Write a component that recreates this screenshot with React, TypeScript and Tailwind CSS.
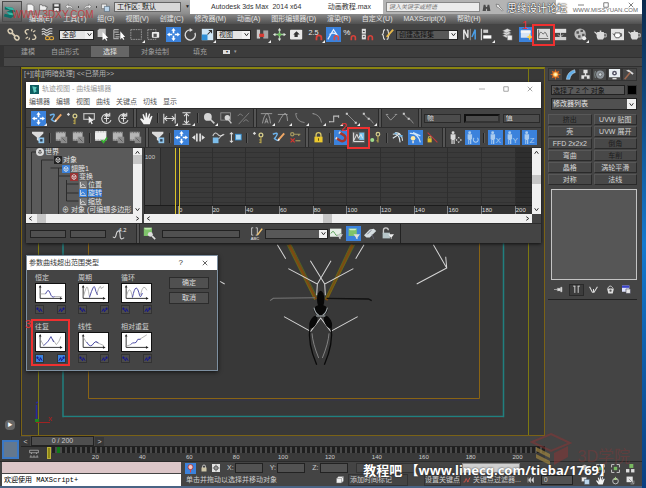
import type { ReactNode } from "react"
import { clsx } from "clsx"

const blue = "#3b82dc"

// Icon glyphs, all drawn on a 16x16 box
const glyphs: Record<string, ReactNode> = {
	link: (
		<g fill="none" stroke="#d9cdb4" strokeWidth="1.8">
			<ellipse cx="4" cy="4" rx="3" ry="2.4" transform="rotate(45 4 4)" />
			<path d="M6 6l4 4" strokeWidth="2.6" />
			<ellipse cx="12" cy="12" rx="3" ry="2.4" transform="rotate(45 12 12)" />
		</g>
	),
	unlink: (
		<g fill="none" stroke="#d9cdb4" strokeWidth="1.8">
			<path d="M6 2H4a2.500 2.500 0 0 0-2 4l2 2M10 14h2a2.500 2.500 0 0 0 2-4l-2-2" />
			<path d="M10 1l-1 3M14 3l-3 2M2 13l3-2M6 15l1-3" strokeWidth="1.4" />
		</g>
	),
	wave: (
		<g fill="none" strokeWidth="1.4">
			<path d="M1 2q2-2 4 0t4 0 5-1M1 5q2-2 4 0t4 0 5-1M1 8q2-2 4 0t4 0 5-1" stroke="#cfcfcf" />
			<ellipse cx="8" cy="12.5" rx="2.5" ry="2" stroke="#e0a93e" />
			<ellipse cx="13" cy="12.5" rx="2.5" ry="2" stroke="#e0a93e" />
		</g>
	),
	select: (
		<g>
			<path d="M2 3l2-2h8v8l-2 2H2z" fill="#c4c4c4" />
			<path d="M8 5l7 7-2.6.2L14 15l-1.5.6L11 13l-3 2z" fill="#fff" />
		</g>
	),
	byName: (
		<g>
			<path d="M1 2h6M1 5h6M3 8h5M3 11h5M1 2v11h6" stroke="#a8a8a8" strokeWidth="1.4" fill="none" />
			<path d="M9 4l6 7-2.6.2L14 14l-1.5.6L11 12l-2 2z" fill="#fff" />
		</g>
	),
	rect: <path d="M1 2h13v12H1z" fill="none" stroke="#aaa" strokeDasharray="2 1" />,
	cross: (
		<g>
			<path d="M1 2h10v12H1z" fill="none" stroke="#aaa" strokeDasharray="2 1" />
			<rect x="6" y="5" width="9" height="7" rx="1" fill="#eee" />
			<rect x="8" y="7" width="4" height="4" fill="#555" />
		</g>
	),
	move: (
		<path
			d="M8 0l2.6 3.4H9v3h-2v-3H5.400zM8 16l2.600-3.400H9v-3H7v3H5.400zM0 8l3.400-2.600V7h3v2h-3v1.600zM16 8l-3.400-2.600V7h-3v2h3v1.600z"
			fill="#fff"
		/>
	),
	rotate: (
		<g fill="none" stroke="#ddd" strokeWidth="1.6">
			<path d="M13.500 6A6.300 6.300 0 1 1 8 2.200" />
			<path d="M7 0l4 2.500L7 5z" fill="#ddd" stroke="none" />
		</g>
	),
	scale: (
		<g>
			<rect x="1" y="1" width="14" height="14" fill="#cfe6f6" />
			<rect x="1" y="8" width="7" height="7" fill="#2f8fd6" />
			<path d="M8 8l5-5M9.500 3H13v3.500" stroke="#333" strokeWidth="1.300" fill="none" />
		</g>
	),
	pivot: (
		<g>
			<rect x="1" y="2" width="4" height="11" fill="#c8c8c8" />
			<rect x="9" y="3" width="6" height="10" fill="#a5a5a5" />
			<path d="M4 7h6v4H4z" fill="#d93b33" />
		</g>
	),
	manip: (
		<g>
			<path d="M8 1v14M1 8h14" stroke="#9fd09a" strokeWidth="1.600" />
			<path d="M8 0l2 3H6zM8 16l2-3H6zM0 8l3-2v4zM16 8l-3-2v4z" fill="#e3e3e3" />
			<circle cx="8" cy="8" r="2" fill="#6cbf5a" />
		</g>
	),
	keyboard: (
		<g>
			<rect x="0" y="2" width="15" height="12" rx="1" fill="#e8e8e8" />
			<path d="M8 4l4 4H9.500v3h-4V8H4z" fill="#333" />
		</g>
	),
	snap: (
		<g>
			<text x="-2" y="8" fontSize="9" fill="#eee" fontFamily="Liberation Sans">2.5</text>
			<path d="M8 15v-3a3 3 0 0 1 6 0v3" fill="none" stroke="#d8423a" strokeWidth="2.200" />
		</g>
	),
	angle: (
		<g fill="none">
			<path d="M1 14L8 2l6 9M3 8q5-4 10 1" stroke="#e4efff" strokeWidth="1.400" />
			<path d="M9 15v-3a2.400 2.400 0 0 1 5 0v3" stroke="#e0483f" strokeWidth="2" />
		</g>
	),
	percent: (
		<g>
			<text x="-1" y="9" fontSize="10" fill="#eee" fontFamily="Liberation Sans">%</text>
			<path d="M9 15v-3a2.400 2.400 0 0 1 5 0v3" fill="none" stroke="#d8423a" strokeWidth="2" />
		</g>
	),
	spinner: (
		<g>
			<rect x="1" y="1" width="5" height="6" fill="#ddd" />
			<rect x="1" y="8" width="5" height="6" fill="#ddd" />
			<path d="M2 5l1.500-2L5 5zM2 10l1.500 2L5 10z" fill="#333" />
			<path d="M9 15v-3a2.400 2.400 0 0 1 5 0v3" fill="none" stroke="#d8423a" strokeWidth="2" />
		</g>
	),
	braces: (
		<g fill="none" stroke="#ddd" strokeWidth="1.300">
			<path d="M5 2Q3 2 3 5T1 8q2 0 2 3t2 3M7 2q2 0 2 3t2 3q-2 0-2 3t-2 3" />
			<path d="M7 11l8-9" stroke="#e8b94a" strokeWidth="2.200" />
		</g>
	),
	mirror: (
		<g>
			<path d="M1 14V2l5 10V2" fill="none" stroke="#e5e5e5" strokeWidth="1.800" />
			<path d="M9 1v14" stroke="#aaa" />
			<path d="M11 11l4-9v12" fill="none" stroke="#4a9fe8" strokeWidth="1.800" />
		</g>
	),
	align: (
		<g fill="#cfcfcf">
			<rect x="1" y="1" width="1.500" height="14" />
			<rect x="4" y="2" width="6" height="4" />
			<rect x="4" y="9" width="10" height="4" fill="#fff" />
		</g>
	),
	layers: (
		<g fill="#dcdcdc" stroke="#555" strokeWidth=".5">
			<path d="M3 9.500l6-3 5 2.500-6 3z" />
			<path d="M3 6.500l6-3L14 6l-6 3z" />
			<path d="M3 3.500l6-3L14 3 8 6z" />
			<path d="M9 9h6v6H9z" fill="#eee" />
		</g>
	),
	ribbon: (
		<g>
			<rect x="1" y="3" width="12" height="9" fill="#d7e4f5" />
			<rect x="1" y="3" width="12" height="3" fill="#f6f6f6" />
			<path d="M12 7l1.300 2.700L16 11l-2.700 1.300L12 15l-1.300-2.700L8 11l2.700-1.300z" fill="#ffd24a" />
		</g>
	),
	curveEditor: (
		<g>
			<rect x="0" y="1" width="16" height="14" fill="#dcdcdc" />
			<path d="M2 2v11h12M2 10q2-7 4-4t3 0 4 5" fill="none" stroke="#555" />
		</g>
	),
	schematic: (
		<g>
			<rect x="0" y="1" width="15" height="5" fill="#e1e1e1" />
			<rect x="0" y="11" width="15" height="4" fill="#cfcfcf" />
			<path d="M8 4v7M5 8l3 3 3-3" stroke="#ddd" fill="none" />
		</g>
	),
	material: (
		<g>
			<circle cx="7.500" cy="7.500" r="7" fill="#bdbdbd" />
			<path d="M3 4h3v3H3zM8 2h3v3H8zM5 9h3v3H5zM10 7h3v3h-3z" fill="#555" />
			<circle cx="12.500" cy="12.500" r="2.500" fill="#eee" />
		</g>
	),
	teapot: (
		<g fill="#dcdcdc">
			<path d="M4 5h8q2 6-1 9H5Q2 11 4 5z" />
			<path d="M4 9L0 5l1-.8L5 7zM7 3h2v2H7z" />
			<path d="M12 7h3v4h-3" fill="none" stroke="#dcdcdc" />
		</g>
	),
	teapotFrame: (
		<g>
			<rect x="0" y="1" width="16" height="14" fill="#e4e4e4" />
			<path d="M5 6h6q2 4-1 6H6Q3 10 5 6zM5 9L2 7M11 7h2v3h-2" fill="#fff" stroke="#444" />
		</g>
	),
	draw: (
		<g fill="none" strokeWidth="1.700">
			<path d="M1 4q7-3 5 1t-3 4 4 3" stroke="#6db3ec" />
			<path d="M8 11l7-8" stroke="#f0a765" strokeWidth="2.400" />
			<path d="M7 12l2-2" stroke="#eee" strokeWidth="2" />
		</g>
	),
	addKey: (
		<g>
			<path d="M3 1l2 2-2 2-2-2z" fill="#ddd" />
			<circle cx="11" cy="5" r="2.300" fill="none" stroke="#d4cc8c" strokeWidth="1.600" />
			<path d="M11 7v8M11 11H9M11 14H9" stroke="#b4a14c" strokeWidth="1.500" />
		</g>
	),
	region: (
		<g>
			<rect x="1" y="2" width="13" height="7" fill="none" stroke="#bbb" strokeWidth="1.500" />
			<path d="M7 5l6 6-2.500.2 1.500 3.400-1.500.4L9 12l-2 2z" fill="#eee" />
		</g>
	),
	slide: (
		<g fill="none" stroke="#ddd" strokeWidth="1.300">
			<path d="M12 4A5.800 5.800 0 1 0 13.500 10" />
			<path d="M8 5v7M5 8h6M12 1v4H9" />
			<path d="M6 5l2-3 2 3z" fill="#ddd" />
		</g>
	),
	hand: (
		<path
			d="M4.500 15L0 8.500l1.500-.8L5 10 3 3l1.500-.5 2.200 5L7 1h1.600L9 7.500l2.100-5.700 1.500.4L11 8.500l3-4 1.400.8L12 15z"
			fill="#f2f2f2"
		/>
	),
	panH: <path d="M1 2v12M15 2v12M2 8h12M5 5L2 8l3 3M11 5l3 3-3 3" fill="none" stroke="#ddd" strokeWidth="1.300" />,
	panV: <path d="M3 1h10M3 15h10M8 2v12M5 5l3-3 3 3M5 11l3 3 3-3" fill="none" stroke="#ddd" strokeWidth="1.300" />,
	zoom: (
		<g>
			<path d="M8 8l6 6" stroke="#ccc" strokeWidth="2" />
			<circle cx="6" cy="6" r="4.800" fill="#d5d5d5" />
		</g>
	),
	zoomRegion: (
		<g>
			<rect x="1" y="1" width="12" height="9" fill="none" stroke="#999" />
			<circle cx="9" cy="7" r="3.300" fill="#d5d5d5" />
			<path d="M10 9l4 5" stroke="#ccc" strokeWidth="1.700" />
		</g>
	),
	isolate: <path d="M1 5q3-5 6 0M2 15L15 1M8 12q3-5 6 0" fill="none" stroke="#7c7c7c" strokeWidth="1.200" />,
	tanAuto: (
		<g fill="none" stroke="#aaa">
			<path d="M1 2h14M3 14Q5 4 8 2t5 12" />
			<path d="M6 14l2-6 2 6M7 12h2" />
		</g>
	),
	tanSpline: <path d="M1 3h12M2 13Q4 8 8 3t5 8" fill="none" stroke="#aaa" />,
	tanFast: <path d="M2 2q1 10 11 11M2 2h2" fill="none" stroke="#999" />,
	tanSlow: <path d="M2 2q9 1 11 11M2 2h2" fill="none" stroke="#999" />,
	tanStep: <path d="M2 12h5V5h6M2 11v2M13 4v3" fill="none" stroke="#bbb" strokeWidth="1.400" />,
	tanLinear: (
		<g>
			<path d="M2 2l11 11" stroke="#999" />
			<path d="M1 1h2.500v2.500H1zM12 12h2.500v2.500H12z" fill="#ccc" />
		</g>
	),
	tanSmooth: (
		<g>
			<path d="M2 2q3 5 6 6t6 6" fill="none" stroke="#999" />
			<path d="M1 1h2.500v2.500H1zM7 7h2.500v2.500H7z" fill="#ccc" />
		</g>
	),
	breakTan: <path d="M2 4l5 6 6-6M1 3h3M12 3h3" fill="none" stroke="#aaa" />,
	filter: (
		<g>
			<path d="M0 1h14v2L9 8v5l-3-2V8L0 3z" fill="#dcdcdc" />
			<rect x="8" y="8" width="7" height="7" fill="#8fc6ee" />
			<path d="M10 10h3v3h-3z" fill="#345" />
		</g>
	),
	film: (
		<g>
			<path d="M1 1h12v11H1z" fill="#b5b5b5" />
			<path d="M1 2h12M1 11h12" stroke="#444" strokeDasharray="1 1" />
			<path d="M7 7h8v8H7z" fill="#8b8b8b" />
			<path d="M9 9l4 4" stroke="#555" />
		</g>
	),
	filmOk: (
		<g>
			<path d="M0 0h14v12H0z" fill="#eee" />
			<path d="M0 1h14M0 11h14" stroke="#777" strokeDasharray="1 1" />
			<path d="M8 11l2.500 3L15 8" stroke="#35b32f" strokeWidth="2" fill="none" />
		</g>
	),
	moveH: <path d="M0 8l4-3v6zM16 8l-4-3v6zM5 3h2v10H5zM9 3h2v10H9z" fill="#e3e3e3" />,
	scaleKeys: (
		<g>
			<path d="M1 6q3-6 6-2t8 0" fill="none" stroke="#ccc" strokeWidth="1.400" />
			<rect x="1" y="8" width="7" height="7" fill="#7cbdea" />
			<path d="M8 10l5-6" stroke="#eee" />
		</g>
	),
	scaleVals: (
		<g>
			<path d="M3 2v12M1 4l2-2 2 2M1 12l2 2 2-2" fill="none" stroke="#ddd" strokeWidth="1.300" />
			<rect x="8" y="4" width="7" height="7" fill="#a8d6f3" stroke="#2f8fd6" />
		</g>
	),
	reduce: (
		<g fill="none" strokeWidth="1.500">
			<circle cx="4" cy="4" r="2" stroke="#a5995f" />
			<path d="M6 4h8M12 4v2" stroke="#a5995f" />
			<path d="M2 9l5 5M7 9l-5 5" stroke="#d4352e" />
			<path d="M8 12h6" stroke="#a5995f" />
		</g>
	),
	lock: (
		<g>
			<path d="M5 8V5a3 3 0 0 1 6 0v3" fill="none" stroke="#d8c766" strokeWidth="1.600" />
			<rect x="3" y="7" width="10" height="7" fill="#ecc92f" />
			<path d="M7.500 9h1v3h-1z" fill="#443a00" />
		</g>
	),
	magnet: (
		<g fill="none" transform="rotate(-60 8 8)">
			<path d="M4 3v6a4 4 0 0 0 8 0V3" stroke="#a5352b" strokeWidth="3" />
			<path d="M2.500 3h3M10.500 3h3" stroke="#ddd" strokeWidth="2" />
		</g>
	),
	range: (
		<g>
			<rect x="0" y="1" width="16" height="14" fill="#5a5a5a" />
			<rect x="9" y="2" width="6" height="9" fill="#79c4ee" />
			<path d="M2 2v11h13M2 12l4-8 2 5 3-5 2 5" fill="none" stroke="#e8e8e8" strokeWidth="1.200" />
		</g>
	),
	keyable: (
		<g>
			<circle cx="4" cy="11" r="2.500" fill="#9fdd8c" />
			<circle cx="11" cy="4" r="2.200" fill="none" stroke="#d4cc8c" strokeWidth="1.500" />
			<path d="M11 6v8M11 12H9" stroke="#b4a14c" strokeWidth="1.500" />
		</g>
	),
	tangents: (
		<g fill="none" stroke="#dfe9ee" strokeWidth="1.300">
			<path d="M1 4q8-2 9 10M4 2q8 0 9 10M1 9l9-6" />
			<path d="M3 3h3M9 6h4" stroke="#73b6e4" strokeWidth="2" />
		</g>
	),
	tangentSel: (
		<g fill="none">
			<path d="M1 3q10-1 13 11M5 2l9 4" stroke="#cfe6fa" strokeWidth="1.500" />
			<circle cx="5" cy="9" r="2.800" fill="#ffe9a0" />
			<path d="M5 12v3" stroke="#ddd" strokeWidth="2" />
		</g>
	),
	tangentLock: (
		<g>
			<path d="M2 2l12 12" stroke="#c0393d" strokeWidth="1.300" />
			<path d="M3 9V7h3v2" fill="none" stroke="#d8c766" />
			<path d="M2 9h5v5H2z" fill="#e0c02f" />
		</g>
	),
	biped: (
		<g fill="#dadada">
			<circle cx="5" cy="2" r="1.800" />
			<path d="M2 4h6v6H7v6H5.500v-5h-1v5H3v-6H2z" />
			<path d="M12 7l1.500 2h-3zM12 15l1.500-2h-3zM8 11l2-1.500v3zM16 11l-2-1.500v3z" />
		</g>
	),
	bipedRot: (
		<g fill="#a9cbee">
			<circle cx="4.500" cy="2" r="1.800" />
			<path d="M2 4h5.500v6h-1v6H5v-5H4v5H2.800v-6H2z" />
			<path d="M14 8.500a3 3 0 1 1-4 0" fill="none" stroke="#a9cbee" strokeWidth="1.300" />
		</g>
	),
	bipedX: bipedAxis("X"),
	bipedY: bipedAxis("Y"),
	bipedZ: bipedAxis("Z"),
	stats: (
		<g>
			<path d="M1 12q3 3 4-2t3-5 2 6 5 2" fill="none" stroke="#ddd" strokeWidth="1.300" />
			<text x="8" y="6" fontSize="7" fill="#eee" fontFamily="Liberation Sans">4.2</text>
		</g>
	),
	zoomObj: (
		<g>
			<rect x="1" y="1" width="10" height="10" fill="#7fc36b" />
			<path d="M1 1h10L9 3H3z" fill="#bfe8b0" />
			<circle cx="9" cy="9" r="3" fill="#ddd" />
			<path d="M11 11l4 4" stroke="#ddd" strokeWidth="2" />
		</g>
	),
	label: (
		<g fill="none" stroke="#ddd">
			<path d="M4 1H2v9h2M7 1h2v9H7" />
			<path d="M9 10l6-8" stroke="#efc271" strokeWidth="2" />
			<text x="1" y="16" fontSize="5" fill="#eee" stroke="none" fontFamily="Liberation Sans">ABC</text>
		</g>
	),
	curveFilter: (
		<g>
			<rect x="0" y="2" width="14" height="10" fill="#e7efe7" />
			<path d="M1 8q3-5 5 0t7 0" fill="none" stroke="#4b9a4b" />
			<path d="M8 9h8l-3 4v2l-2-1v-1z" fill="#ccc" />
		</g>
	),
	objFilter: (
		<g>
			<rect x="2" y="2" width="10" height="9" fill="#7fc36b" />
			<path d="M2 2h10l-2 2H4z" fill="#cfeec4" />
			<path d="M8 9h8l-3 4v2l-2-1v-1z" fill="#ddd" />
		</g>
	),
	pinFilter: (
		<g fill="#d5dde0">
			<path d="M0 10l7-7 5-1 3 3-8 8H3z" />
			<path d="M4 9l5-5M10 9l2 6" stroke="#667" />
		</g>
	),
	unlockFilter: (
		<g>
			<path d="M3 8V4a3 3 0 0 1 6 0" fill="none" stroke="#ccc" strokeWidth="1.600" />
			<rect x="2" y="7" width="9" height="7" fill="#b7c6c9" />
			<path d="M9 9h7l-3 4v2l-1-1v-1z" fill="#eee" />
		</g>
	),
	newDoc: <path d="M2 2h8l4 4v9H2z" fill="#f4f4f4" stroke="#555" />,
	open: <path d="M1 13V3h4l1 2h6v2h3l-3 6z" fill="#eee" stroke="#444" />,
	save: (
		<g>
			<path d="M1 1h14v14H1z" fill="#444" />
			<path d="M4 2h8v4H4zM4 9h8v5H4z" fill="#eee" />
		</g>
	),
	undo: <path d="M6 2L1 6.500 6 11V8q6-1 8 4 0-8-8-7z" fill="#eee" stroke="#555" strokeWidth=".8" />,
	redo: <path d="M10 2l5 4.500L10 11V8Q4 7 2 12q0-8 8-7z" fill="#eee" stroke="#555" strokeWidth=".8" />,
	project: (
		<g>
			<path d="M1 2h9v8H1z" fill="#eee" stroke="#555" />
			<path d="M6 6h9v9H6z" fill="#bcd6ec" stroke="#456" />
		</g>
	),
	binoculars: <path d="M1 14L3 3h3l1 4h2l1-4h3l2 11H9v-4H7v4z" fill="#4c4c4c" />,
	wrench: <path d="M2 2l5 1 1 3 6 7-1.500 1.500L6 8 3 7z" fill="#eee" stroke="#555" />,
	star: <path d="M8 1l2 5 5 .3-4 3.400 1.400 5L8 12l-4.400 2.700L5 9.700 1 6.300 6 6z" fill="#777" />,
	create: (
		<g>
			<path d="M8 0l1.500 4 4-1.500L12 6.500l4 1.500-4 1.500 1.500 4-4-1.500L8 16l-1.500-4-4 1.500 1.500-4L0 8l4-1.500-1.500-4 4 1.500z" fill="#d9681f" />
			<circle cx="8" cy="8" r="3.400" fill="#ffd06a" />
			<circle cx="8" cy="8" r="1.700" fill="#fff6cf" />
		</g>
	),
	modify: <path d="M2 15Q3 4 14 1l1 4Q8 7 7 15z" fill="#62aee8" stroke="#d9efff" strokeWidth=".7" />,
	hierarchy: <path d="M5 1h6v5H9v3h5v5h-4v-3H6v3H2V9h5V6H5z" fill="#e3e3e3" />,
	motion: (
		<g fill="none">
			<circle cx="9" cy="8" r="6" fill="#8e959b" />
			<circle cx="9" cy="8" r="2.500" fill="#cfd8dd" stroke="#555" />
			<path d="M2 3q-2 5 0 10" stroke="#9aa" />
		</g>
	),
	display: (
		<g>
			<rect x="0" y="0" width="16" height="12" fill="#e8eef2" />
			<circle cx="8" cy="6" r="3.500" fill="#556" />
			<circle cx="8" cy="6" r="1.300" fill="#fff" />
			<path d="M5 13h6v2H5z" fill="#ddd" />
		</g>
	),
	hammer: (
		<g>
			<path d="M3 2l4-1 7 5-1.500 2.500L8 5z" fill="#dadada" />
			<path d="M9 5L1 15" stroke="#a06a50" strokeWidth="2.200" />
		</g>
	),
	pin: <path d="M0 8h6M6 5v6M7 6h4v4H7zM12 4h2v8h-2z" fill="#ddd" stroke="#ddd" />,
	showEnd: <path d="M5 2v12M11 2v12M2 2h4M10 2h4" stroke="#e5e5e5" strokeWidth="1.500" fill="none" />,
	unique: <path d="M1 3l5 10h3l6-10M8 13V7" stroke="#ddd" strokeWidth="1.800" fill="none" />,
	trash: (
		<g>
			<path d="M2 6h12l-2 9H4z" fill="#ddd" />
			<path d="M3 6q4-8 9-1" fill="none" stroke="#ddd" strokeWidth="1.500" />
			<circle cx="8" cy="10" r="2" fill="#555" />
		</g>
	),
	config: (
		<g>
			<rect x="0" y="1" width="13" height="11" fill="#dfe4ff" />
			<path d="M0 1h13v4H0z" fill="#3a43c8" />
			<path d="M7 7h8v8H7z" fill="#e8e8e8" stroke="#445" />
		</g>
	),
	pinRed: (
		<g>
			<circle cx="8" cy="5.500" r="4.500" fill="#f4c8c4" stroke="#b03030" strokeWidth="1.500" />
			<path d="M7 9h2v6H7z" fill="#d44" />
		</g>
	),
	lockGrey: (
		<g>
			<path d="M5 8V5a3 3 0 0 1 6 0v3" fill="none" stroke="#ddd" strokeWidth="1.600" />
			<rect x="3" y="7" width="10" height="8" fill="#cfc6a8" />
		</g>
	),
	abs: (
		<g>
			<rect x="0" y="0" width="16" height="16" fill="#e2e2e2" />
			<circle cx="8" cy="8" r="4" fill="none" stroke="#333" strokeWidth="1.500" />
			<path d="M8 1v14M1 8h14" stroke="#333" />
		</g>
	),
	cube: <path d="M1 5l4-4h10v9l-4 4H1zM1 5h10v9M11 5l4-4" fill="#eee" stroke="#777" />,
	keyCurve: <path d="M1 12q3 2 4-4t3 0 2 4 4-9" fill="none" stroke="#cf5248" strokeWidth="1.800" />,
	start: <path d="M2 3v10M7 3v10L3 8zM13 3v10L9 8z" fill="#ddd" stroke="#ddd" />,
	extents: (
		<g>
			<path d="M1 6V1h5M10 1h5v5M15 10v5h-5M6 15H1v-5" fill="none" stroke="#ddd" strokeWidth="1.500" />
			<rect x="5" y="5" width="6" height="6" fill="#77b860" />
		</g>
	),
	extentsAll: (
		<g>
			<rect x="6" y="0" width="7" height="7" fill="#77b860" />
			<rect x="0" y="9" width="6" height="6" fill="#ddd" />
			<path d="M9 9h6v6H9z" fill="#ddd" />
		</g>
	),
	orbit: (
		<g fill="none">
			<circle cx="8" cy="9" r="5" stroke="#ddd" strokeWidth="1.400" />
			<path d="M8 1l3 6H5z" fill="#a9cf8a" />
		</g>
	),
	maximize: (
		<g>
			<rect x="1" y="1" width="11" height="10" fill="#e3e3e3" />
			<path d="M5 5l9 9M14 8v6H8" fill="none" stroke="#999" strokeWidth="1.700" />
		</g>
	),
	trackBar: <path d="M1 2h14v4H1zM1 13h14M3 10v3M8 10v3M13 10v3M4 6v2M12 6v2" fill="none" stroke="#ccc" />,
}

function bipedAxis(axis: string) {
	return (
		<g fill="#a9cbee">
			<circle cx="4.500" cy="2" r="1.800" />
			<path d="M2 4h5.500v6h-1v6H5v-5H4v5H2.800v-6H2z" />
			<text x="8" y="15" fontSize="10" fontFamily="Liberation Sans">{axis}</text>
		</g>
	)
}

function Glyph({ name, className = "size-[13px]" }: { name: string; className?: string }) {
	return (
		<svg viewBox="0 0 16 16" className={clsx("shrink-0 overflow-visible", className)} aria-hidden="true">
			{glyphs[name]}
		</svg>
	)
}

function Tool({ name, active, marked, corner }: { name: string; active?: boolean; marked?: boolean; corner?: boolean }) {
	return (
		<button
			aria-label={name}
			className={clsx("relative flex h-4 w-[17px] shrink-0 items-center justify-center", marked && "z-10 outline-2 outline-offset-1 outline-[#ef3030]")}
		>
			<span className={clsx("flex size-[15px] items-center justify-center", active && "bg-[#3b82dc]")}>
				<Glyph name={name} />
			</span>
			{corner && (
				<svg viewBox="0 0 3 3" className="absolute right-0 bottom-0 size-[3px]">
					<path d="M3 0v3H0z" fill="#eee" />
				</svg>
			)}
		</button>
	)
}

// "|" thin divider, "#" group boundary, "." small gap, "*" active, "!" outlined, "," has a flyout
function ToolRow({ items }: { items: string[] }) {
	return items.map((item, i) => {
		if (item === "|") return <span key={i} className="mx-0.5 h-2.5 w-0.5 shrink-0 border-r border-[#5a5a5a] bg-[#222]" />
		if (item === "#") return <span key={i} className="mx-px h-full w-1 shrink-0 border-x border-[#2a2a2a] bg-[#555]" />
		if (item === ".") return <span key={i} className="w-[3px] shrink-0" />
		return (
			<Tool
				key={i}
				name={item.replace(/[*!,]/g, "")}
				active={item.includes("*")}
				marked={item.includes("!")}
				corner={item.includes(",")}
			/>
		)
	})
}

function Combo({ label, value, className, dark }: { label: string; value: string; className: string; dark?: boolean }) {
	return (
		<span className={clsx("relative flex h-[10px] shrink-0", className)}>
			<select
				aria-label={label}
				className={clsx(
					"h-full w-full appearance-none border border-[#222] pl-0.5 text-[7px] leading-[8px] outline-none",
					dark ? "bg-[#585858] text-[#111]" : "bg-[#e4e4e4] text-[#222]",
				)}
			>
				<option>{value}</option>
			</select>
			<span className="pointer-events-none absolute inset-y-px right-px flex w-2 items-center justify-center bg-[#f0f0f0]">
				<Chevron dir="down" />
			</span>
		</span>
	)
}

function Chevron({ dir }: { dir: "up" | "down" | "left" | "right" }) {
	return (
		<svg
			viewBox="0 0 8 8"
			className={clsx("size-[5px]", dir === "up" && "rotate-180", dir === "left" && "rotate-90", dir === "right" && "-rotate-90")}
		>
			<path d="M1 2l3 4 3-4" fill="none" stroke="#333" strokeWidth="1.600" />
		</svg>
	)
}

function VScroll({ thumb }: { thumb: string }) {
	return (
		<div className="flex w-[9px] shrink-0 flex-col items-center bg-[#f0f0f0] py-0.5">
			<Chevron dir="up" />
			<div className="w-full flex-1">
				<div className={clsx("h-[9px] w-full bg-[#c6c6c6]", thumb)} />
			</div>
			<Chevron dir="down" />
		</div>
	)
}

function HScroll({ thumb }: { thumb: string }) {
	return (
		<div className="flex h-[9px] items-center bg-[#f0f0f0] px-0.5">
			<Chevron dir="left" />
			<div className="h-full flex-1">
				<div className={clsx("h-full w-[9px] bg-[#c6c6c6]", thumb)} />
			</div>
			<Chevron dir="right" />
		</div>
	)
}

const mainMenu = ["编辑(E)", "工具(T)", "组(G)", "视图(V)", "创建(C)", "修改器(M)", "动画(A)", "图形编辑器(D)", "渲染(R)", "自定义(U)", "MAXScript(X)", "帮助(H)"]

function Header() {
	return (
		<header className="relative">
			<div className="flex h-[14px] items-center bg-white">
				<div className="flex h-full w-[190px] shrink-0 items-center gap-1 bg-gradient-to-b from-[#b5b5b5] to-[#8c8c8c] pl-[26px]">
					{["newDoc", "open", "save", "undo"].map((n) => (
						<Glyph key={n} name={n} className="size-[9px]" />
					))}
					<span className="size-0.5 bg-[#444]" />
					<Glyph name="redo" className="size-[9px]" />
					<span className="size-0.5 bg-[#444]" />
					<Glyph name="project" className="size-[9px]" />
					<select aria-label="工作区" className="h-[10px] w-[67px] shrink-0 appearance-none border border-[#666] bg-[#d8d8d8] pl-0.5 text-[7px] leading-[8px] text-[#111]">
						<option>工作区: 默认</option>
					</select>
					<span className="text-[5px] text-[#222]">▼</span>
				</div>
				<p className="flex w-[193px] shrink-0 justify-between pr-3 pl-[21px] text-[7px] text-[#333]">
					<span>Autodesk 3ds Max&nbsp; 2014 x64</span>
					<span>动画教程.max</span>
				</p>
				<div className="flex h-full flex-1 items-center bg-[#b4b4b4]">
					<input
						aria-label="搜索"
						placeholder="键入关键字或短语"
						className="ml-[3px] h-[10px] w-[94px] border border-[#888] bg-[#ececec] px-0.5 text-[6px] italic placeholder:text-[#777]"
					/>
					<div className="ml-0.5 flex items-center gap-1">
						{["binoculars", "wrench", "star"].map((n) => (
							<Glyph key={n} name={n} className="size-[9px]" />
						))}
					</div>
				</div>
				<div className="flex h-full w-[86px] shrink-0 items-start justify-between bg-white pt-0.5 pr-2 pl-[22px] text-[#555]">
					<svg viewBox="0 0 8 8" className="size-[6px]"><path d="M0 4h8" stroke="currentColor" /></svg>
					<svg viewBox="0 0 8 8" className="size-[6px]"><path d="M1 1h6v6H1z" fill="none" stroke="currentColor" /></svg>
					<svg viewBox="0 0 8 8" className="size-[6px]"><path d="M1 1l6 6M7 1L1 7" stroke="currentColor" /></svg>
				</div>
			</div>
			<nav className="flex h-[10px] items-center gap-[11px] bg-gradient-to-b from-[#8a8a8a] to-[#505050] pl-[29px] text-[7px] leading-[10px] whitespace-nowrap text-[#e4e4e4]">
				{mainMenu.map((m) => (
					<button key={m}>{m}</button>
				))}
			</nav>
			<button aria-label="3ds Max" className="absolute top-px left-0.5 flex h-[21px] w-[20px] items-center border border-[#4c4c4c] bg-gradient-to-b from-[#9a9a9a] to-[#5c5c5c]">
				<svg viewBox="0 0 16 16" className="size-[14px]">
					<path d="M2 2l9 1 3 4-3 2 2 3-4 3-8-2 1-3 5 1-3-3 4-2-6-1z" fill="#0d6e68" />
					<path d="M2 2l9 1 2 3-6-1zM4 8l7 1 2 3-6-1z" fill="#37b8a6" />
				</svg>
			</button>
			<span className="absolute top-[9px] left-3 text-[10px] leading-3 text-[#c92f2f]/80">WWW.3DXY.COM</span>
			<span className="absolute top-[3px] right-[75px] text-[10px] leading-3 text-white [text-shadow:0_0_1px_#333,0_0_1px_#333,0_0_2px_#333]">思缘设计论坛</span>
			<span className="absolute top-[6px] right-1 text-[6px] leading-2 text-[#666]">WWW.MISSYUAN.COM</span>
		</header>
	)
}

function MainToolbar() {
	return (
		<div className="relative flex h-[22px] items-center border-b border-[#333] bg-[#444] pl-[5px]">
			<ToolRow items={["link", "unlink", "wave", "."]} />
			<Combo label="选择过滤器" value="全部" className="w-[35px]" />
			<ToolRow items={["select", "byName", "rect,", "cross", ".", "*move", "rotate", "scale,"]} />
			<Combo label="参考坐标系" value="视图" className="w-[35px]" />
			<ToolRow items={[".", "pivot,", "manip", "keyboard", ".", "snap,", "*angle", "percent", "spinner", ".", "braces"]} />
			<Combo label="命名选择集" value="创建选择集" className="w-[62px]" dark />
			<ToolRow items={[".", "mirror", "align,", ".", "layers", ".", "*ribbon", "!curveEditor", "schematic", ".", "material,", ".", "teapot", "teapotFrame", "teapot"]} />
			<span className="absolute -top-1 right-[114px] text-[11px] leading-[11px] text-[#ef3030]">1</span>
		</div>
	)
}

function Ribbon() {
	return (
		<div className="border-l-4 border-[#333] bg-[#3c3c3c]">
			<div className="flex h-[11px] items-center text-[7px] leading-[11px] text-[#a0a0a0]">
				<button className="ml-[17px]">建模</button>
				<button className="ml-4">自由形式</button>
				<button className="ml-3 w-[38px] bg-[#666] text-[#e0e0e0]">选择</button>
				<button className="ml-3">对象绘制</button>
				<button className="ml-6">填充</button>
				<span className="ml-4 flex h-1 w-[7px] items-center justify-center bg-[#ddd] text-[4px] leading-none text-[#222]">▾</span>
				<span className="ml-1 text-[5px]">▾</span>
			</div>
			<div className="h-[10px] border-y border-[#303030] bg-[#484848]" />
		</div>
	)
}

function Scene() {
	return (
		<svg className="absolute inset-0 size-full" aria-hidden="true">
			<g transform="translate(-21 -67)" fill="none">
				<path d="M38.500 436V68.500H528.500V436" stroke="#7d7911" />
				<path d="M63 110V416.500H503.500V110" stroke="#20807f" strokeWidth="1.500" />
				<path d="M64 418H503" stroke="#5c2020" strokeWidth=".6" />
				<path d="M88.500 130V398.500H479.500V130" stroke="#8a6414" />
				<path d="M89 400H479" stroke="#34345c" strokeWidth=".6" />
				<path d="M36.500 420V405M36 403l2-1" stroke="#2a2aa0" strokeWidth="1.500" />
				<path d="M36 422.500h14M49 417l3 4M52 417l-3 4" stroke="#a02323" />
				<path d="M35 419h4v3h-4z" fill="#1e8a1e" />
			</g>
			{/* dragonfly, seen from the front */}
			<g transform="translate(199 173) scale(.3334)" fill="none">
				<g stroke="#7d4a12" strokeWidth="9">
					<path d="M207 14L287 178M398 14L318 180" />
				</g>
				<g stroke="#5f7a1c" strokeWidth="2">
					<path d="M201 14L284 180M213 14L290 170M392 14L316 176M404 14L322 176" />
				</g>
				<g stroke="#d5d5d5" strokeWidth="3">
					<path d="M172 14l25 42M432 14l-25 42M205 86l87 46-2 34M400 86l-86 46 2 34M271 62l43 70M333 62l-41 70" />
					<path d="M192 230l80 44 30-40 30 40 81-44M640 14l40 70-90 48M680 84l-3-34M0 124l14 8" />
				</g>
				<path d="M150 182l10-7 125-2" stroke="#777" strokeWidth="3" />
				<path d="M320 175l125 2 10 5" stroke="#111" strokeWidth="4" />
				<g fill="#080808">
					<ellipse cx="302" cy="178" rx="11" ry="26" />
					<ellipse cx="302" cy="210" rx="21" ry="16" />
					<ellipse cx="280" cy="246" rx="10" ry="20" transform="rotate(25 280 246)" />
					<ellipse cx="324" cy="246" rx="10" ry="20" transform="rotate(-25 324 246)" />
				</g>
				<path d="M282 203q4 18 14 22M322 203q-4 18-14 22M288 228h28" stroke="#a5adb0" strokeWidth="3" />
				<path d="M270 260q-8 50 20 114M333 260q8 50-20 114" stroke="#0a0a0a" strokeWidth="4" />
				<path d="M276 280q2 30 20 74M327 280q-2 30-20 74" stroke="#a8a8a8" strokeWidth="2" />
			</g>
		</svg>
	)
}

const editorMenu = ["编辑器", "编辑", "视图", "曲线", "关键点", "切线", "显示"]

const tree = [
	{ text: "世界", pad: "pl-[10px]", fill: "#ddd" },
	{ text: "对象", pad: "pl-[28px]", fill: "#222" },
	{ text: "翅膀1", pad: "pl-[36px]", fill: blue },
	{ text: "变换", pad: "pl-[44px]", fill: "#933" },
	{ text: "位置", pad: "pl-[53px]", fill: "#777" },
	{ text: "旋转", pad: "pl-[53px]", fill: blue, selected: true },
	{ text: "缩放", pad: "pl-[53px]", fill: "#777" },
	{ text: "⊕ 对象 (可编辑多边形", pad: "pl-[36px]", fill: "" },
]

function TrackTree() {
	return (
		<div className="flex w-[116px] shrink-0 flex-col">
			<div className="flex flex-1">
				<div className="relative flex flex-1 flex-col overflow-hidden bg-[#5a5a5a]">
					<svg className="absolute inset-0 size-full" aria-hidden="true">
						<path d="M5.500 4h6M5.500 4v62M15.500 12h12M15.500 12v54M24.500 20h12M32.500 28h12M32.500 20v46M40.500 36h12M40.500 45h12M40.500 53h12M40.500 32v21" fill="none" stroke="#2c2c2c" />
					</svg>
					{tree.map((row) => (
						<div key={row.text} className={clsx("relative flex flex-1 items-center gap-px text-[7px] leading-[8px] whitespace-nowrap text-[#e6e6e6]", row.pad)}>
							{row.fill && (
								<svg viewBox="0 0 16 16" className="size-2 shrink-0">
									<rect width="16" height="16" rx={row.pad === "pl-[10px]" ? 8 : 1} fill={row.fill} />
									{row.pad === "pl-[53px]" ? (
										<path d="M3 2v11h11M4 11q3-9 8 0" fill="none" stroke="#e5e5e5" strokeWidth="1.500" />
									) : (
										<path d="M8 3l4 2.500v5L8 13l-4-2.500v-5zM8 8v5M8 8l4-2M8 8L4 6" fill={row.text === "世界" ? "#333" : "none"} stroke="#e5e5e5" strokeWidth="1.500" />
									)}
								</svg>
							)}
							<span className={clsx(row.selected && "bg-[#2f74d0]")}>{row.text}</span>
						</div>
					))}
				</div>
				<VScroll thumb="" />
			</div>
			<HScroll thumb="ml-1" />
		</div>
	)
}

const ruler = [0, 20, 40, 60, 80, 100, 120, 140, 160, 180]

function CurveGraph() {
	return (
		<div className="flex min-w-0 flex-1 flex-col">
			<div className="flex min-h-0 flex-1">
				<div className="relative flex flex-1 flex-col border-l border-[#222] bg-[#3a3a3a]">
					<div className="flex flex-1">
						<div className="w-[15px] bg-[#444] pt-[5px] text-[6px] leading-[8px] text-[#ccc]">100</div>
						<div className="w-[18px] border-l border-[#2c2c2c]" />
						<div className="flex flex-1 bg-[repeating-linear-gradient(to_bottom,transparent_0_4px,#323232_4px_5px)]">
							{ruler.map((n) => (
								<div key={n} className="flex-[2] border-l border-[#2e2e2e]" />
							))}
							<div className="flex-1 border-l border-[#2e2e2e] bg-black/20" />
						</div>
					</div>
					<div className="flex h-[9px] border-t border-[#1c1c1c] bg-[#333] pl-[33px] text-[6px] leading-[8px] text-[#ddd]">
						{ruler.map((n) => (
							<span key={n} className="w-0 flex-[2] border-l border-[#888]">{n}</span>
						))}
						<span className="w-0 flex-1 border-l border-[#888]">200</span>
					</div>
					<div className="absolute inset-y-0 left-[30px] w-[5px] border-x border-[#d9c22b]" />
				</div>
				<VScroll thumb="mt-[20px]" />
			</div>
			<div className="mr-[9px]">
				<HScroll thumb="ml-[46%]" />
			</div>
		</div>
	)
}

function CurveEditor() {
	return (
		<section className="absolute top-[15px] right-1 left-[5px] bg-[#444] shadow-[0_1px_3px_#111]">
			<div className="flex h-[14px] items-center bg-white pr-2 pl-1 text-[7px] text-[#999]">
				<svg viewBox="0 0 16 16" className="size-[9px]">
					<path d="M0 0h16v16H0z" fill="#0e5d60" />
					<path d="M4 2l8 2-2 4 2 3-5 3z" fill="#5fc9bd" />
				</svg>
				<h2 className="ml-[3px] flex-1">轨迹视图 - 曲线编辑器</h2>
				<div className="flex gap-[18px]">
					<svg viewBox="0 0 8 8" className="size-[6px]"><path d="M0 4h8" stroke="#999" /></svg>
					<svg viewBox="0 0 8 8" className="size-[6px]"><path d="M1 1h6v6H1z" fill="none" stroke="#888" /></svg>
					<svg viewBox="0 0 8 8" className="size-[6px]"><path d="M1 1l6 6M7 1L1 7" stroke="#888" /></svg>
				</div>
			</div>
			<nav className="flex h-3 items-center gap-[6px] bg-white pl-[3px] text-[7px] text-[#555]">
				{editorMenu.map((m) => (
					<button key={m}>{m}</button>
				))}
			</nav>
			<div className="flex h-5 items-center overflow-hidden border-y border-[#2d2d2d] pl-1">
				<ToolRow items={["*move,", "draw", "addKey", "region", "slide", "slide", "#", "hand", "|", "panH,", "panV,", "|", "zoom,", "zoomRegion", "isolate", "#", "tanAuto,", "tanSpline,", "tanFast,", "tanSlow,", "tanStep,", "tanLinear,", "tanSmooth,", "#", "breakTan", "tanSmooth", "#"]} />
				<div className="flex flex-1 gap-[3px] px-px">
					<input aria-label="帧" defaultValue="帧" className="h-[9px] w-0 flex-1 border border-[#2a2a2a] bg-[#4c4c4c] px-0.5 text-[7px] text-[#ddd]" />
					<input aria-label="帧值" className="h-[9px] w-0 flex-1 border-2 border-t-[#111] border-r-[#333] border-b-[#333] border-l-[#111] bg-[#4c4c4c]" />
					<input aria-label="值" defaultValue="值" className="h-[9px] w-0 flex-1 border border-[#2a2a2a] bg-[#4c4c4c] px-0.5 text-[7px] text-[#ddd]" />
				</div>
			</div>
			<div className="relative flex h-5 items-center border-b border-[#2d2d2d] pl-1">
				<ToolRow items={["filter", "|", "film", "film", "|", "filmOk", "film", "film", "#", "filter", "|", "*move", "moveH", ".", "scaleKeys", "scaleVals", "|", "addKey", ".", "draw", "reduce", "#", "lock", "|", "*magnet", "!range", "keyable", "|", "tangents", "*tangentSel", "tangentLock", "#", "biped", "*bipedRot", "|", "*bipedX", "*bipedY", "*bipedZ"]} />
				<span className="absolute -top-1.5 left-[315px] text-[11px] leading-[11px] text-[#ef3030]">2</span>
			</div>
			<div className="flex h-[75px] gap-0.5">
				<TrackTree />
				<CurveGraph />
			</div>
			<div className="flex h-5 items-center border-t border-[#2d2d2d] pl-1">
				<input aria-label="关键点时间" className="h-2 w-[36px] border border-[#222] bg-[#505050]" />
				<input aria-label="关键点值" className="ml-1 h-2 w-[36px] border border-[#222] bg-[#505050]" />
				<span className="w-1" />
				<ToolRow items={["stats"]} />
				<span className="w-2" />
				<ToolRow items={["#", "zoomObj"]} />
				<input aria-label="选择对象" className="ml-1 h-2 w-[78px] border border-[#222] bg-[#505050]" />
				<span className="w-2" />
				<ToolRow items={["label"]} />
				<Combo label="轨迹集" value="" className="w-[63px]" dark />
				<ToolRow items={["curveFilter", "*objFilter", "pinFilter", "unlockFilter"]} />
				<span className="ml-1 h-full w-px bg-[#222]" />
			</div>
		</section>
	)
}

const rangeTypes = [
	{ name: "恒定", grey: "M3 11h7M20 14h8", ink: "M10 11q3-7 5-1t5 4" },
	{ name: "周期", grey: "M4 15Q8 0 9 4t2 10M19 12q4-14 5-7l3-2", ink: "M11 15q5-16 6-11t3 8" },
	{ name: "循环", grey: "M4 15Q8-2 11 15M20 12q3-14 7-5", ink: "M11 15Q15-5 19 13q1 3 3-3" },
	{ name: "往复", grey: "M3 5l5 9M18 7l4 6 3-4 2-5", ink: "M8 14l5-5 3-5 3 6" },
	{ name: "线性", grey: "M3 3l5 8M18 10l9 4", ink: "M8 10q4 8 8 1 2-3 5 0" },
	{ name: "相对重复", grey: "M3 15l6-2M19 7l8-5", ink: "M9 13q2-3 4-2t4-4h3" },
]

function RangeButton({ label, on, out }: { label: string; on: boolean; out?: boolean }) {
	return (
		<button aria-label={label} className={clsx("flex h-[9px] w-[9px] items-center justify-center border border-[#333]", on ? "bg-[#3b82dc]" : "bg-[#4b4b4b]")}>
			<svg viewBox="0 0 16 16" className={clsx("size-2", out && "-scale-x-100")}>
				<path d="M1 5h5M3 2v6M5 7l3 5 2-7 4 7" fill="none" stroke="#14148f" strokeWidth="2.200" />
			</svg>
		</button>
	)
}

function RangeDialog() {
	return (
		<section className="absolute top-[188px] left-[5px] w-[192px] border border-[#7d8fa0] bg-[#444] shadow-[0_1px_4px_#111]">
			<div className="flex h-[14px] items-center bg-white pr-[9px] pl-0.5 text-[7px] text-[#333]">
				<h2 className="flex-1">参数曲线超出范围类型</h2>
				<button className="mr-[19px] text-[8px]">?</button>
				<svg viewBox="0 0 8 8" className="size-[6px]"><path d="M1 1l6 6M7 1L1 7" stroke="#333" /></svg>
			</div>
			<div className="flex h-[100px] justify-between px-2">
				<div className="grid grid-cols-3 content-start gap-x-3 gap-y-[10px] pt-1">
					{rangeTypes.map((t) => {
						const on = t.name === "往复"
						return (
							<div key={t.name} className={clsx("relative h-[39px] w-[31px]", on && "outline-2 outline-offset-2 outline-[#ef3030]")}>
								{on && <span className="absolute -top-1 -left-[10px] text-[11px] leading-[11px] text-[#ef3030]">3</span>}
								<p className="text-[7px] leading-[8px] text-[#d0d0d0]">{t.name}</p>
								<svg viewBox="0 0 31 20" className="mt-px h-[20px] w-[31px] border border-[#111] bg-white">
									<path d="M4 3v13h23" fill="none" stroke="#222" />
									<path d="M2.500 4L4 1l1.500 3zM26 14.500l3 1.500-3 1.500z" fill="#222" />
									<path d={t.grey} fill="none" stroke="#999" strokeWidth=".8" />
									<path d={t.ink} fill="none" stroke="#3c3c9c" />
								</svg>
								<div className="mt-0.5 flex justify-between">
									<RangeButton label={t.name + " 前"} on={on} />
									<RangeButton label={t.name + " 后"} on={on} out />
								</div>
							</div>
						)
					})}
				</div>
				<div className="flex flex-col gap-[3px] pt-[7px] text-[7px] leading-[10px] text-[#ddd]">
					<button className="h-3 w-[40px] border border-[#2c2c2c] bg-[#505050]">确定</button>
					<button className="h-3 w-[40px] border border-[#2c2c2c] bg-[#505050]">取消</button>
				</div>
			</div>
		</section>
	)
}

const modifiers = [
	["挤出", true], ["UVW 贴图", false],
	["壳", false], ["UVW 展开", false],
	["FFD 2x2x2", false], ["倒角", true],
	["弯曲", false], ["车削", true],
	["晶格", false], ["涡轮平滑", false],
	["对称", false], ["法线", false],
] as const

function CommandPanel() {
	return (
		<aside className="flex w-[97px] shrink-0 flex-col bg-[#444] pr-[5px] pl-[3px]">
			<div className="flex h-[15px] items-center">
				{["create", "modify", "hierarchy", "motion", "display", "hammer"].map((n) => (
					<button key={n} aria-label={n} className={clsx("flex h-[13px] flex-1 items-center justify-center border border-[#333]", n === "modify" ? "bg-[#333]" : "bg-[#484848]")}>
						<Glyph name={n} className="size-[11px]" />
					</button>
				))}
			</div>
			<div className="mt-[3px] ml-[3px] flex gap-0.5">
				<input aria-label="对象名称" defaultValue="选择了 2 个 对象" className="h-[10px] w-0 flex-1 border border-[#222] bg-[#5a5a5a] px-px text-[7px] leading-[8px] text-[#111]" />
				<button aria-label="对象颜色" className="size-[10px] border border-[#333] bg-black" />
			</div>
			<div className="relative mt-[3px] ml-[3px]">
				<select aria-label="修改器列表" className="block h-3 w-full appearance-none border border-[#222] bg-[#505050] pl-px text-[7px] leading-[10px] text-[#e6e6e6]">
					<option>修改器列表</option>
				</select>
				<span className="pointer-events-none absolute inset-y-px right-px flex w-[9px] items-center justify-center bg-[#f0f0f0]">
					<Chevron dir="down" />
				</span>
			</div>
			<div className="mt-1 grid grid-cols-2 gap-x-0.5 gap-y-px">
				{modifiers.map(([name, off]) => (
					<button key={name} disabled={off} className={clsx("h-[11px] border border-r-[#2a2a2a] border-b-[#2a2a2a] border-t-[#585858] border-l-[#585858] bg-[#484848] text-[7px] leading-[9px] whitespace-nowrap", off ? "text-[#1c1c1c]" : "text-[#d4d4d4]")}>
						{name}
					</button>
				))}
			</div>
			<div className="mt-1 ml-[3px] h-[91px] border border-[#c4c4c4] bg-[#565656]" />
			<div className="flex h-[19px] items-center justify-between px-1">
				{["pin", "showEnd", "unique", "trash", "config"].map((n) => (
					<button key={n} aria-label={n} className={clsx("flex h-3 items-center px-0.5", n === "showEnd" && "border border-[#2a2a2a] bg-[#3c3c3c]")}>
						<Glyph name={n} className="size-[9px]" />
					</button>
				))}
			</div>
			<div className="border-t border-[#222]" />
		</aside>
	)
}

const frameLabels = [20, 40, 60, 80, 100, 120, 140, 160, 180, 200]

function TimeLine() {
	return (
		<div className="flex h-[25px] bg-[#3a3a3a]">
			<div className="w-[21px] shrink-0 p-0.5 pt-1">
				<div className="h-full border-2 border-[#3b78c4] bg-[#64788e]" />
			</div>
			<div className="flex-1">
				<div className="flex h-[10px] items-center bg-[#444] text-[7px] leading-[9px] text-[#ccc]">
					<button className="w-[9px] bg-[#383838]">&lt;</button>
					<button className="mx-px w-[63px] border border-[#222] bg-[#4e4e4e] leading-[8px]">0 / 200</button>
					<button className="w-[9px] bg-[#383838]">&gt;</button>
				</div>
				<div className="flex h-[15px] border-t border-[#222]">
					<div className="flex w-[26px] shrink-0 items-center justify-center">
						<Glyph name="trackBar" className="size-[10px]" />
					</div>
					<div className="flex-1">
						<div className="flex h-1.5 bg-[repeating-linear-gradient(to_right,#1f1f1f_0_3px,#4a4a4a_3px_5px)]">
							<span className="h-3 w-1 border border-[#b9b03a] bg-[#8f8714]" />
							<span className="ml-1.5 h-1.5 w-[3px] bg-[#0f7a1b]" />
						</div>
						<div className="grid grid-cols-10 pr-1 pl-[25px] text-center text-[6px] leading-2 text-[#ccc]">
							{frameLabels.map((f) => (
								<span key={f}>{f}</span>
							))}
						</div>
					</div>
				</div>
			</div>
			<div className="w-[97px] shrink-0 bg-[#444]" />
		</div>
	)
}

function StatusBar() {
	return (
		<footer className="relative flex h-[25px] border-t border-[#2a2a2a] bg-[#444] text-[7px] whitespace-nowrap text-[#ccc]">
			<div className="ml-0.5 w-[179px] shrink-0">
				<div className="h-3 border-b border-[#444] bg-[#dcc6c8]" />
				<div className="h-3 bg-white pl-0.5 font-['Liberation_Mono','Noto_Sans_CJK_SC',monospace] leading-3 text-black">欢迎使用 MAXScript+</div>
			</div>
			<div className="ml-1 w-[163px] shrink-0">
				<div className="flex h-3 items-center gap-[3px]">
					<span className="flex size-[11px] items-center justify-center bg-[#3b82dc]"><Glyph name="pinRed" className="size-[9px]" /></span>
					<Glyph name="lockGrey" className="mx-px size-2" />
					<Glyph name="abs" className="size-2" />
					{["X:", "Y:", "Z:"].map((axis) => (
						<label key={axis} className="ml-1 flex flex-1 items-center gap-px">
							{axis}
							<input className="h-[10px] w-0 flex-1 border border-[#222] bg-[#525252]" />
						</label>
					))}
				</div>
				<div className="flex h-3 items-center justify-between pl-px leading-3">
					<span>单击并拖动以选择并移动对象</span>
					<Glyph name="cube" className="mr-1 size-2" />
				</div>
			</div>
			<div className="flex-1">
				<div className="flex h-3 items-center">
					<span className="ml-2 h-[10px] w-[60px] border border-[#333] bg-[#4a4a4a]" />
					<span className="ml-[46px] h-[10px] w-[58px] border border-[#888] bg-[#d0d0d0]" />
				</div>
				<div className="flex h-3 items-center leading-3">
					<span className="w-[60px] border border-[#333] pl-px leading-[10px]">添加时间标记</span>
					<button className="ml-4 border border-[#333] leading-[10px]">设置关键点</button>
					<Glyph name="keyCurve" className="ml-0.5 size-2" />
					<button className="ml-0.5">关键点过滤器...</button>
					<Glyph name="start" className="ml-1.5 size-2" />
					<input aria-label="当前帧" defaultValue="0" className="ml-1.5 h-[10px] w-[32px] border border-[#222] bg-[#525252] px-0.5 text-[7px]" />
				</div>
			</div>
			<div className="grid w-[64px] shrink-0 grid-cols-4 place-items-center pr-1">
				{["zoom", "extents", "extents", "extentsAll", "project", "hand", "orbit", "maximize"].map((n, i) => (
					<button key={i} aria-label={n}><Glyph name={n} className="block size-[9px]" /></button>
				))}
			</div>
			<svg viewBox="0 0 42 32" className="absolute right-[70px] bottom-[21px] h-[32px] w-[42px] text-[#8e3434]/50">
				<path d="M2 9L21 1l19 9-19 8z" fill="none" stroke="currentColor" strokeWidth="2" />
				<path d="M6 14l14 7v4L6 18zM6 21l14 7v4L6 25z" fill="#a08540" fillOpacity=".7" />
				<path d="M24 20l14-7v11l-14 8z" fill="currentColor" />
			</svg>
			<span className="absolute right-[12px] bottom-[21px] text-[16px] leading-4 text-[#8e3434]/40">3D学院</span>
			<p className="absolute right-[30px] bottom-2 font-['Noto_Sans','Noto_Sans_CJK_SC',sans-serif] text-[13px] leading-4 font-bold text-white [text-shadow:0_0_2px_#222]">教程吧 【www.linecg.com/tieba/1769】</p>
		</footer>
	)
}

export default function App() {
	return (
		<div className="flex min-h-screen w-full bg-[#444] font-['Liberation_Sans','Noto_Sans_CJK_SC',sans-serif]">
			<div className="flex min-w-0 flex-1 flex-col">
				<Header />
				<MainToolbar />
				<Ribbon />
				<main className="flex flex-1">
					<div className="flex w-[21px] shrink-0 flex-col items-center justify-end border-r border-[#2a2a2a] bg-[#3a3a3a] pb-[6px]">
						<button aria-label="播放" className="flex size-[10px] items-center justify-center rounded-sm bg-[#666] text-[5px] text-white">▶</button>
					</div>
					<div className="relative min-h-[369px] flex-1 overflow-hidden border border-t-2 border-t-[#8a8512] border-r-[#7a6216] border-b-[#7a6216] border-l-[#7a6216] bg-[#383838]">
						<div className="absolute -inset-x-px -top-0.5 -bottom-px">
							<Scene />
							<p className="absolute top-[3px] left-[3px] text-[7px] leading-2 text-[#b5b5b5]">[+][前][明暗处理] &lt;&lt;已禁用&gt;&gt;</p>
							<CurveEditor />
							<RangeDialog />
						</div>
					</div>
					<CommandPanel />
				</main>
				<TimeLine />
				<StatusBar />
				<div className="h-0.5 bg-[#4a6485]" />
			</div>
			{/* desktop showing past the window edge */}
			<div className="w-1 shrink-0 bg-gradient-to-b from-[#0b2a4c] via-[#1479cf] to-[#0a3f80]" />
		</div>
	)
}
